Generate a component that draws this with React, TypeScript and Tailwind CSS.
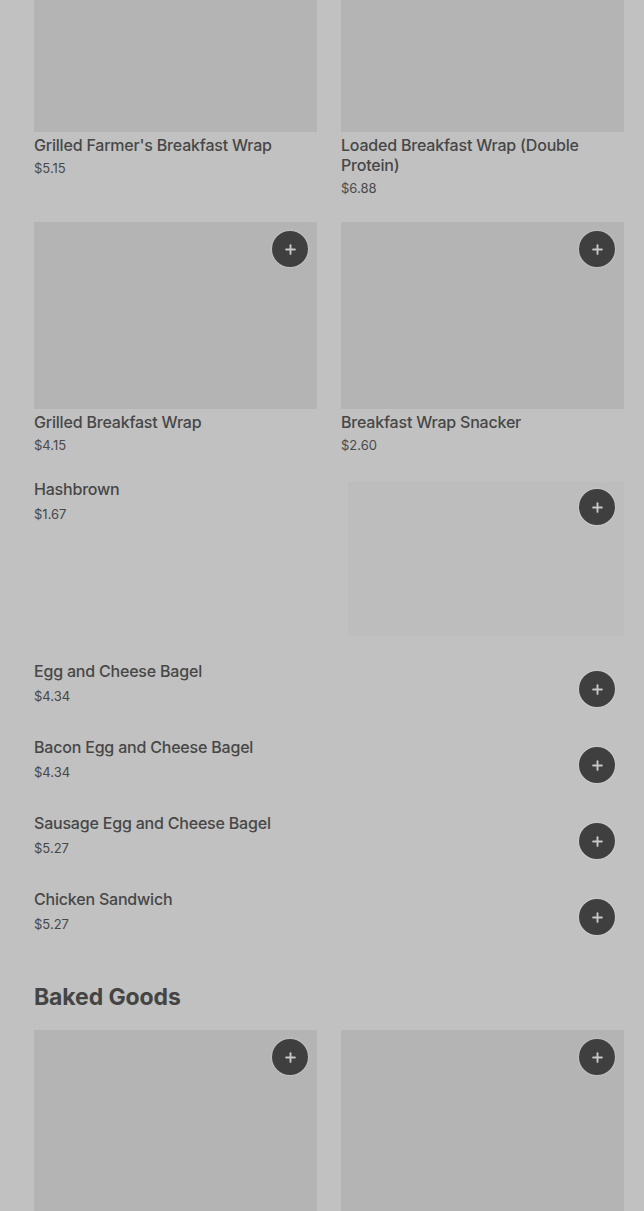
import { Plus } from 'lucide-react'

type Item = { name: string; price: string }

const topCards: Item[] = [
  { name: "Grilled Farmer's Breakfast Wrap", price: '$5.15' },
  { name: 'Loaded Breakfast Wrap (Double Protein)', price: '$6.88' },
  { name: 'Grilled Breakfast Wrap', price: '$4.15' },
  { name: 'Breakfast Wrap Snacker', price: '$2.60' },
]

const listItems: Item[] = [
  { name: 'Egg and Cheese Bagel', price: '$4.34' },
  { name: 'Bacon Egg and Cheese Bagel', price: '$4.34' },
  { name: 'Sausage Egg and Cheese Bagel', price: '$5.27' },
  { name: 'Chicken Sandwich', price: '$5.27' },
]

function AddButton({ className = '' }: { className?: string }) {
  return (
    <button
      className={`w-9 h-9 rounded-full bg-[#3f3f3f] flex items-center justify-center shadow-[0_0_2px_rgba(255,255,255,0.5)] ${className}`}
    >
      <Plus className="w-[15px] h-[15px] text-[#c8c8c8]" strokeWidth={3} />
    </button>
  )
}

function Card({ item, showButton = true }: { item?: Item; showButton?: boolean }) {
  return (
    <div>
      <div className="relative h-[187px] bg-[#b4b4b4]">
        {showButton && <AddButton className="absolute top-[9px] right-[9px]" />}
      </div>
      {item && (
        <div className="pt-[3px]">
          <p className="text-[16px] leading-5 font-medium tracking-[-0.2px] text-[#474747]">{item.name}</p>
          <p className="mt-[4px] text-[13px] leading-[18px] text-[#4a4a4a]">{item.price}</p>
        </div>
      )}
    </div>
  )
}

export default function App() {
  return (
    <div className="h-[1211px] overflow-hidden bg-[#c1c1c1] font-['Inter',sans-serif] text-[#474747]">
      <div className="-mt-[55px] pl-[34px] pr-[20px]">
        {/* Cards */}
        <div className="grid grid-cols-2 gap-x-6 gap-y-[25px]">
          <Card item={topCards[0]} showButton={false} />
          <Card item={topCards[1]} showButton={false} />
          <Card item={topCards[2]} />
          <Card item={topCards[3]} />
        </div>

        {/* Hashbrown */}
        <div className="mt-[25px] flex justify-between">
          <div>
            <p className="text-[16px] leading-5 font-medium tracking-[-0.2px]">Hashbrown</p>
            <p className="mt-[6px] text-[13px] leading-[18px]">$1.67</p>
          </div>
          <div className="relative mt-[3px] w-[276px] h-[154px] bg-[#bdbdbd]">
            <AddButton className="absolute top-[7px] right-[9px]" />
          </div>
        </div>

        {/* List */}
        <div className="mt-[25px]">
          {listItems.map((item) => (
            <div key={item.name} className="h-[76px] flex justify-between pr-[9px]">
              <div>
                <p className="text-[16px] leading-5 font-medium tracking-[-0.2px]">{item.name}</p>
                <p className="mt-[6px] text-[13px] leading-[18px]">{item.price}</p>
              </div>
              <AddButton className="mt-[10px]" />
            </div>
          ))}
        </div>

        {/* Baked Goods */}
        <h2 className="mt-[18px] text-[23px] leading-7 font-bold tracking-[-0.1px] text-[#444]">Baked Goods</h2>
        <div className="mt-[19px] grid grid-cols-2 gap-x-6">
          <Card />
          <Card />
        </div>
      </div>
    </div>
  )
}
